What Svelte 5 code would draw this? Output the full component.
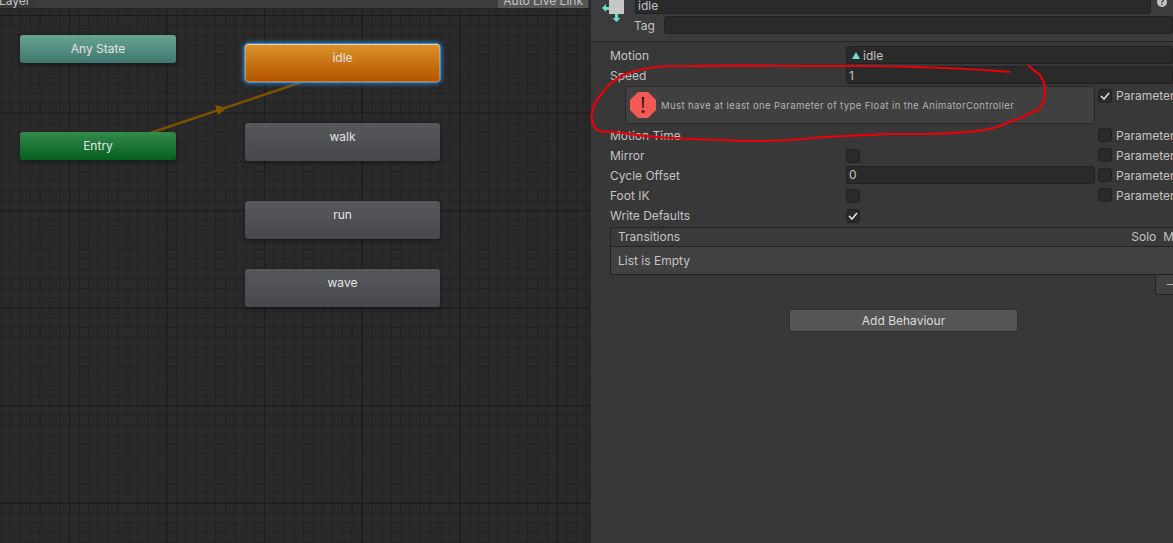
<script>
  const nodes = [
    { name: "Any State", kind: "any", x: 20, y: 35 },
    { name: "Entry", kind: "entry", x: 20, y: 132 },
    { name: "idle", kind: "state active", x: 245, y: 44 },
    { name: "walk", kind: "state", x: 245, y: 123 },
    { name: "run", kind: "state", x: 245, y: 201 },
    { name: "wave", kind: "state", x: 245, y: 269 },
  ];

  const paramRows = [
    { label: "Mirror", type: "check" },
    { label: "Cycle Offset", type: "num", value: "0" },
    { label: "Foot IK", type: "check" },
    { label: "Write Defaults", type: "check", checked: true, noParam: true },
  ];
</script>

<div class="window">
  <section class="graph">
    <div class="toolbar">
      <span class="crumb">Layer</span>
      <span class="live">Auto Live Link</span>
    </div>
    <div class="canvas">
      <svg class="wire" width="590" height="534" viewBox="0 9 590 534">
        <line x1="150" y1="133" x2="305" y2="81" stroke="#7b5200" stroke-width="2.4" />
        <path d="M215 105 L227 108 L218 115 Z" fill="#7f5500" />
      </svg>
      {#each nodes as node}
        <div class="node {node.kind}" style="left:{node.x}px;top:{node.y - 9}px">{node.name}</div>
      {/each}
    </div>
  </section>

  <section class="inspector">
    <header class="head">
      <svg class="cube" width="26" height="24" viewBox="0 0 26 24">
        <rect x="8" y="0" width="15" height="14" fill="#c6c6c6" />
        <path d="M1 8 L5 4 V7 H8 V10 H5 V12 Z" fill="#67e0d4" />
        <path d="M14 14 H17 V18 H19.5 L15.5 22 L11.5 18 H14 Z" fill="#67e0d4" />
      </svg>
      <div class="names">
        <div class="name-row">
          <div class="field name">idle</div>
          <span class="help">?</span>
        </div>
        <div class="tag-row">
          <span>Tag</span>
          <div class="field tag"></div>
        </div>
      </div>
    </header>

    <div class="props">
      <div class="row">
        <span class="label">Motion</span>
        <div class="field value motion">
          <svg width="8" height="7" viewBox="0 0 8 7"><path d="M4 0 L8 7 H0 Z" fill="#67e0d4" /></svg>
          idle
        </div>
      </div>
      <div class="row">
        <span class="label">Speed</span>
        <div class="field value">1</div>
      </div>

      <div class="warn-row">
        <div class="warning">
          <svg width="26" height="26" viewBox="0 0 26 26">
            <path d="M8 0 H18 L26 8 V18 L18 26 H8 L0 18 V8 Z" fill="#f35a56" />
            <path d="M11.8 5 H14.2 L13.7 16 H12.3 Z" fill="#3a2020" />
            <circle cx="13" cy="19.5" r="1.6" fill="#3a2020" />
          </svg>
          <span>Must have at least one Parameter of type Float in the AnimatorController</span>
        </div>
        <div class="param warn-param">
          <span class="box"><svg width="10" height="8" viewBox="0 0 10 8"><path d="M1 4 L4 7 L9 1" fill="none" stroke="#e4e4e4" stroke-width="1.5" /></svg></span>
          <span>Parameter</span>
        </div>
      </div>

      <div class="row">
        <span class="label">Motion Time</span>
        <div class="slot"></div>
        <div class="param"><span class="box"></span><span>Parameter</span></div>
      </div>

      {#each paramRows as row}
        <div class="row">
          <span class="label">{row.label}</span>
          {#if row.type === "num"}
            <div class="field num">{row.value}</div>
          {:else}
            <div class="slot">
              <span class="box">
                {#if row.checked}
                  <svg width="10" height="8" viewBox="0 0 10 8"><path d="M1 4 L4 7 L9 1" fill="none" stroke="#e4e4e4" stroke-width="1.5" /></svg>
                {/if}
              </span>
            </div>
          {/if}
          {#if !row.noParam}
            <div class="param"><span class="box"></span><span>Parameter</span></div>
          {/if}
        </div>
      {/each}

      <div class="list">
        <div class="list-head">
          <span>Transitions</span>
          <span class="cols"><span>Solo</span><span>Mute</span></span>
        </div>
        <div class="list-body">List is Empty</div>
      </div>
      <div class="list-foot"><span class="minus"></span></div>

      <div class="add"><span class="add-btn">Add Behaviour</span></div>
    </div>
  </section>

  <!-- red marker scribble drawn on top of the screenshot -->
  <svg class="scribble" width="1173" height="543" viewBox="0 0 1173 543">
    <path
      d="M1010 72 C960 68 900 66 847 66 C780 66 720 65 690 66 C670 66 655 66 650 68 C638 70 630 72 623 75 C615 80 611 83 607 87 C601 94 598 98 595 103 C592 110 591 115 592 120 C593 125 594 128 597 130 C602 132 607 132 613 132 C630 134 640 136 657 137 C680 139 700 139 723 140 C740 141 750 141 763 141 C785 141 805 139 823 137 C845 136 870 135 890 134 C905 134 915 134 923 134 C940 134 955 133 967 132 C980 131 990 129 997 127 C1005 124 1012 121 1020 118 C1027 115 1032 113 1037 110 C1041 107 1043 104 1044 100 C1045 96 1045 92 1045 87 C1044 82 1042 78 1040 75 C1036 72 1032 69 1028 65"
      fill="none"
      stroke="#ea0008"
      stroke-width="2.2"
    />
  </svg>
</div>

<style>
  :global(body) {
    background: #383838;
    overflow: hidden;
  }

  .window {
    position: relative;
    display: flex;
    width: 1173px;
    height: 543px;
    overflow: hidden;
    font-family: Inter, "Noto Sans", sans-serif;
    font-size: 12px;
    color: #c4c4c4;
  }

  /* graph */
  .graph {
    width: 589px;
    flex: none;
    display: flex;
    flex-direction: column;
    border-right: 1px solid #232323;
  }

  .toolbar {
    height: 8px;
    flex: none;
    background: #3c3c3c;
    border-bottom: 1px solid #232323;
    display: flex;
    justify-content: space-between;
    align-items: flex-end;
    overflow: hidden;
    line-height: 14px;
  }

  .crumb {
    margin-left: -1px;
    padding-right: 12px;
    background: #383838;
    clip-path: polygon(0 0, 100% 0, calc(100% - 9px) 100%, 0 100%);
  }

  .live {
    margin-right: 1px;
    padding: 0 5px;
    background: #585858;
    height: 14px;
    flex: none;
  }

  .canvas {
    position: relative;
    flex: 1;
    overflow: hidden;
    background-color: #2a2a2a;
    background-image:
      linear-gradient(90deg, #1b1b1b 1px, transparent 1px),
      linear-gradient(#1b1b1b 1px, transparent 1px),
      linear-gradient(90deg, #232323 1px, transparent 1px),
      linear-gradient(#232323 1px, transparent 1px);
    background-size: 97.6px 97.6px, 97.6px 97.6px, 9.76px 9.76px, 9.76px 9.76px;
    background-position: 69px 0, 0 6px, 0.7px 0, 0 6px;
  }

  .wire {
    position: absolute;
    left: 0;
    top: 0;
  }

  .node {
    position: absolute;
    width: 156px;
    height: 28px;
    border-radius: 3px;
    text-align: center;
    line-height: 27px;
    color: #e4e4e4;
    box-shadow: 0 2px 5px rgba(0, 0, 0, 0.35);
  }

  .any {
    background: linear-gradient(#67a592, #3f7770);
  }

  .entry {
    background: linear-gradient(#338a4c, #04601f);
  }

  .state {
    width: 195px;
    height: 38px;
    line-height: 28px;
    background: linear-gradient(#56585c, #47484d);
  }

  .active {
    background: linear-gradient(#dc9329, #b35300);
    border-radius: 4px;
    box-shadow: inset 0 1px 0 #efd2a0, inset 0 0 0 1px rgba(255, 225, 190, 0.3), 0 0 0 1px #3c8ed6, 0 0 4px 2px rgba(47, 127, 200, 0.8);
  }

  /* inspector */
  .inspector {
    flex: 1;
    min-width: 0;
    background: #383838;
    border-left: 1px solid #2a2a2a;
  }

  .head {
    height: 42px;
    box-sizing: border-box;
    background: #3c3c3c;
    border-bottom: 1px solid #232323;
    display: flex;
    padding-left: 10px;
  }

  .cube {
    flex: none;
    margin-right: 8px;
  }

  .names {
    flex: 1;
    min-width: 0;
  }

  .name-row {
    display: flex;
    height: 16px;
    margin-top: -3px;
  }

  .field {
    box-sizing: border-box;
    background: #2a2a2a;
    border: 1px solid #212121;
    border-radius: 3px;
    padding-left: 2px;
    line-height: 15px;
  }

  .name {
    flex: 1;
    height: 17px;
  }

  .help {
    width: 22px;
    flex: none;
    text-align: center;
    font-size: 9px;
    font-weight: 700;
    line-height: 10px;
    color: #3c3c3c;
    position: relative;
    z-index: 0;
  }

  .help::before {
    content: "";
    position: absolute;
    z-index: -1;
    left: 6px;
    top: 0;
    width: 10px;
    height: 10px;
    border-radius: 50%;
    background: #c4c4c4;
  }

  .tag-row {
    display: flex;
    align-items: center;
    gap: 9px;
    margin-top: 3px;
    margin-left: -1px;
  }

  .tag-row .field {
    flex: 1;
    height: 18px;
  }

  .props {
    padding: 3px 0 0 19px;
  }

  .row {
    display: flex;
    align-items: center;
    height: 20px;
  }

  .label {
    width: 236px;
    flex: none;
  }

  .value {
    flex: 1;
    height: 18px;
    display: flex;
    align-items: center;
    gap: 3px;
  }

  .motion svg {
    margin-left: 3px;
  }

  .slot {
    width: 249px;
    flex: none;
  }

  .num {
    width: 249px;
    flex: none;
    height: 18px;
  }

  .box {
    box-sizing: border-box;
    display: inline-flex;
    align-items: center;
    justify-content: center;
    width: 14px;
    height: 14px;
    background: #2a2a2a;
    border: 1px solid #212121;
    border-radius: 3px;
    vertical-align: middle;
  }

  .param {
    display: flex;
    align-items: center;
    gap: 4px;
    margin-left: 3px;
    white-space: nowrap;
  }

  .warn-row {
    display: flex;
    align-items: flex-start;
    padding-left: 15px;
    height: 39px;
    margin-top: 1px;
  }

  .warning {
    box-sizing: border-box;
    width: 470px;
    height: 38px;
    flex: none;
    display: flex;
    align-items: center;
    gap: 5px;
    padding-left: 4px;
    background: #404040;
    border: 1px solid #292929;
    border-radius: 3px;
    font-size: 9.5px;
    letter-spacing: 0.4px;
    color: #b4b4b4;
  }

  .warn-param {
    margin-top: 2px;
  }

  .list {
    margin-top: 2px;
    border: 1px solid #232323;
    border-right: none;
    border-radius: 3px 0 0 3px;
    background: #414141;
  }

  .list-head {
    display: flex;
    justify-content: space-between;
    height: 18px;
    line-height: 18px;
    padding-left: 7px;
    background: #3a3a3a;
    border-bottom: 1px solid #232323;
    white-space: nowrap;
    overflow: hidden;
  }

  .cols {
    display: flex;
    gap: 7px;
    margin-right: -19px;
  }

  .list-body {
    height: 27px;
    line-height: 28px;
    padding-left: 7px;
  }

  .list-foot {
    display: flex;
    justify-content: flex-end;
    height: 20px;
  }

  .minus {
    position: relative;
    box-sizing: border-box;
    width: 18px;
    height: 20px;
    background: #414141;
    border: 1px solid #232323;
    border-top: none;
    border-right: none;
    border-radius: 0 0 0 3px;
  }

  .minus::after {
    content: "";
    position: absolute;
    left: 11px;
    top: 9px;
    width: 8px;
    height: 1px;
    background: #b0b0b0;
  }

  .add {
    display: flex;
    padding: 14px 0 0 179px;
  }

  .add-btn {
    box-sizing: border-box;
    width: 229px;
    height: 23px;
    line-height: 21px;
    text-align: center;
    color: #dcdcdc;
    background: #555555;
    border: 1px solid #303030;
    border-radius: 3px;
  }

  .scribble {
    position: absolute;
    left: 0;
    top: 0;
    pointer-events: none;
  }
</style>
